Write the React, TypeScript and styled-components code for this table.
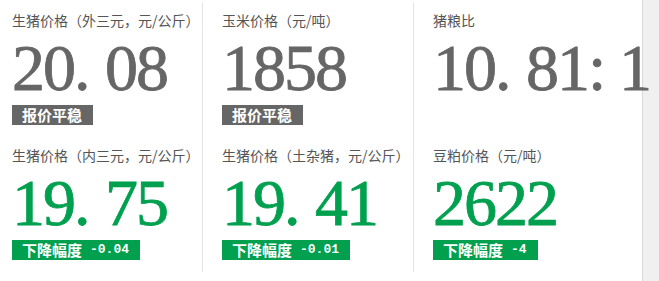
import React from "react";
import styled, { createGlobalStyle } from "styled-components";

const GREY = "#666666";
const GREEN = "#00a04f";

interface Quote {
  label: string;
  value: string;
  tone: "flat" | "down";
  badge?: string;
  change?: string;
}

const GlobalStyle = createGlobalStyle`
  html, body {
    margin: 0;
    padding: 0;
    background: #f0f0f0;
  }
  body {
    font-family: "Noto Sans CJK SC", "Liberation Sans", sans-serif;
  }
`;

const Page = styled.div`
  width: 642px;
  height: 281px;
  background: #fff;
  border-right: 1px solid #d8d8d8;
  display: flex;
  align-items: flex-start;
`;

const Column = styled.div<{ $width: number; $pad: number; $divider?: boolean }>`
  box-sizing: border-box;
  width: ${(p) => p.$width}px;
  height: 269px;
  margin-top: 3px;
  padding-left: ${(p) => p.$pad}px;
  border-left: ${(p) => (p.$divider ? "1px solid #e3e3e3" : "none")};
  display: flex;
  flex-direction: column;
`;

const Cell = styled.div`
  box-sizing: border-box;
  height: 135px;
  padding-top: 7px;
  display: flex;
  flex-direction: column;
  align-items: flex-start;
`;

const Label = styled.div`
  font-size: 14px;
  line-height: 20px;
  color: #555;
  white-space: nowrap;
`;

const Number = styled.div<{ $color: string }>`
  margin-top: 5px;
  height: 65px;
  font-family: "Liberation Serif", serif;
  font-size: 66px;
  line-height: 65px;
  color: ${(p) => p.$color};
  -webkit-text-stroke: 0.8px ${(p) => p.$color};
  white-space: nowrap;
`;

const Char = styled.span`
  display: inline-block;
  width: 31px;
  text-align: left;
`;

const Badge = styled.div<{ $color: string }>`
  margin-top: 5px;
  height: 20px;
  padding: 0 11px 0 10px;
  display: inline-flex;
  align-items: center;
  background: ${(p) => p.$color};
  color: #fff;
  font-size: 15px;
  font-weight: bold;
  line-height: 20px;
  white-space: nowrap;
`;

const Change = styled.span`
  margin-left: 8px;
  font-family: "Liberation Mono", monospace;
  font-size: 13px;
  font-weight: bold;
`;

const columns: { width: number; pad: number; divider: boolean; items: Quote[] }[] = [
  {
    width: 202,
    pad: 12,
    divider: false,
    items: [
      { label: "生猪价格（外三元，元/公斤）", value: "20.08", tone: "flat", badge: "报价平稳" },
      { label: "生猪价格（内三元，元/公斤）", value: "19.75", tone: "down", badge: "下降幅度", change: "-0.04" },
    ],
  },
  {
    width: 211,
    pad: 19,
    divider: true,
    items: [
      { label: "玉米价格（元/吨）", value: "1858", tone: "flat", badge: "报价平稳" },
      { label: "生猪价格（土杂猪，元/公斤）", value: "19.41", tone: "down", badge: "下降幅度", change: "-0.01" },
    ],
  },
  {
    width: 229,
    pad: 19,
    divider: true,
    items: [
      { label: "猪粮比", value: "10.81:1", tone: "flat" },
      { label: "豆粕价格（元/吨）", value: "2622", tone: "down", badge: "下降幅度", change: "-4" },
    ],
  },
];

const QuoteCell: React.FC<{ quote: Quote }> = ({ quote }) => {
  const color = quote.tone === "down" ? GREEN : GREY;
  return (
    <Cell>
      <Label>{quote.label}</Label>
      <Number $color={color}>
        {quote.value.split("").map((c, i) => (
          <Char key={i}>{c}</Char>
        ))}
      </Number>
      {quote.badge && (
        <Badge $color={color}>
          {quote.badge}
          {quote.change && <Change>{quote.change}</Change>}
        </Badge>
      )}
    </Cell>
  );
};

const App: React.FC = () => {
  return (
    <>
      <GlobalStyle />
      <Page>
        {columns.map((col, i) => (
          <Column key={i} $width={col.width} $pad={col.pad} $divider={col.divider}>
            {col.items.map((q, j) => (
              <QuoteCell key={j} quote={q} />
            ))}
          </Column>
        ))}
      </Page>
    </>
  );
};

export default App;
